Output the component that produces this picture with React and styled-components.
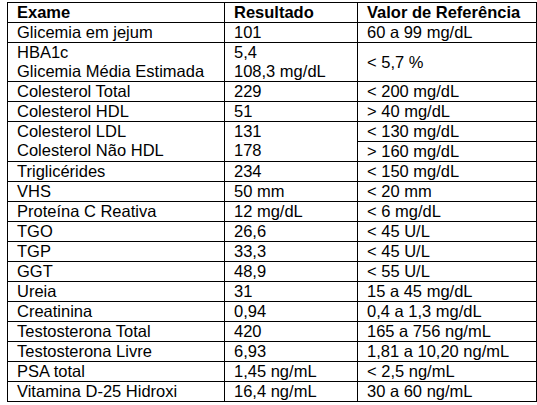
import React from "react";
import styled, { createGlobalStyle } from "styled-components";

const Global = createGlobalStyle`
  html, body { margin: 0; padding: 0; background: #ffffff; }
  body { font-family: "Liberation Sans", Arial, sans-serif; color: #000; }
`;

const Page = styled.div`
  padding: 2px 0 0 7px;
`;

const Table = styled.table`
  border-collapse: collapse;
  table-layout: fixed;
  width: 529px;
  font-size: 16.5px;
  line-height: 19px;
`;

const Col = styled.col`
  width: ${(p) => p.$w}px;
`;

const Cell = styled.td`
  border: 1px solid #000;
  padding: 0 8px 0 9px;
  vertical-align: ${(p) => (p.$middle ? "middle" : "top")};
  white-space: nowrap;
  font-weight: ${(p) => (p.$head ? 700 : 400)};
`;

const Line = styled.div`
  height: 19px;
`;

const rows = [
  { e: ["Glicemia em jejum"], r: ["101"], v: "60 a 99 mg/dL" },
  { e: ["HBA1c", "Glicemia Média Estimada"], r: ["5,4", "108,3 mg/dL"], v: "< 5,7 %" },
  { e: ["Colesterol Total"], r: ["229"], v: "< 200 mg/dL" },
  { e: ["Colesterol HDL"], r: ["51"], v: "> 40 mg/dL" },
  { split: true, e: ["Colesterol LDL", "Colesterol Não HDL"], r: ["131", "178"], v: ["< 130 mg/dL", "> 160 mg/dL"] },
  { e: ["Triglicérides"], r: ["234"], v: "< 150 mg/dL" },
  { e: ["VHS"], r: ["50 mm"], v: "< 20 mm" },
  { e: ["Proteína C Reativa"], r: ["12 mg/dL"], v: "< 6 mg/dL" },
  { e: ["TGO"], r: ["26,6"], v: "< 45 U/L" },
  { e: ["TGP"], r: ["33,3"], v: "< 45 U/L" },
  { e: ["GGT"], r: ["48,9"], v: "< 55 U/L" },
  { e: ["Ureia"], r: ["31"], v: "15 a 45 mg/dL" },
  { e: ["Creatinina"], r: ["0,94"], v: "0,4 a 1,3 mg/dL" },
  { e: ["Testosterona Total"], r: ["420"], v: "165 a 756 ng/mL" },
  { e: ["Testosterona Livre"], r: ["6,93"], v: "1,81 a 10,20 ng/mL" },
  { e: ["PSA total"], r: ["1,45 ng/mL"], v: "< 2,5 ng/mL" },
  { e: ["Vitamina D-25 Hidroxi"], r: ["16,4 ng/mL"], v: "30 a 60 ng/mL" },
];

const Lines = ({ items }) => items.map((t, i) => <Line key={i}>{t}</Line>);

export default function App() {
  return (
    <>
      <Global />
      <Page>
        <Table>
          <colgroup>
            <Col $w={217} />
            <Col $w={133} />
            <Col $w={179} />
          </colgroup>
          <tbody>
            <tr>
              <Cell $head>Exame</Cell>
              <Cell $head>Resultado</Cell>
              <Cell $head>Valor de Referência</Cell>
            </tr>
            {rows.map((row, i) =>
              row.split ? (
                <React.Fragment key={i}>
                  <tr>
                    <Cell rowSpan={2}>
                      <Lines items={row.e} />
                    </Cell>
                    <Cell rowSpan={2}>
                      <Lines items={row.r} />
                    </Cell>
                    <Cell>{row.v[0]}</Cell>
                  </tr>
                  <tr>
                    <Cell>{row.v[1]}</Cell>
                  </tr>
                </React.Fragment>
              ) : (
                <tr key={i}>
                  <Cell>
                    <Lines items={row.e} />
                  </Cell>
                  <Cell>
                    <Lines items={row.r} />
                  </Cell>
                  <Cell $middle>{row.v}</Cell>
                </tr>
              )
            )}
          </tbody>
        </Table>
      </Page>
    </>
  );
}
